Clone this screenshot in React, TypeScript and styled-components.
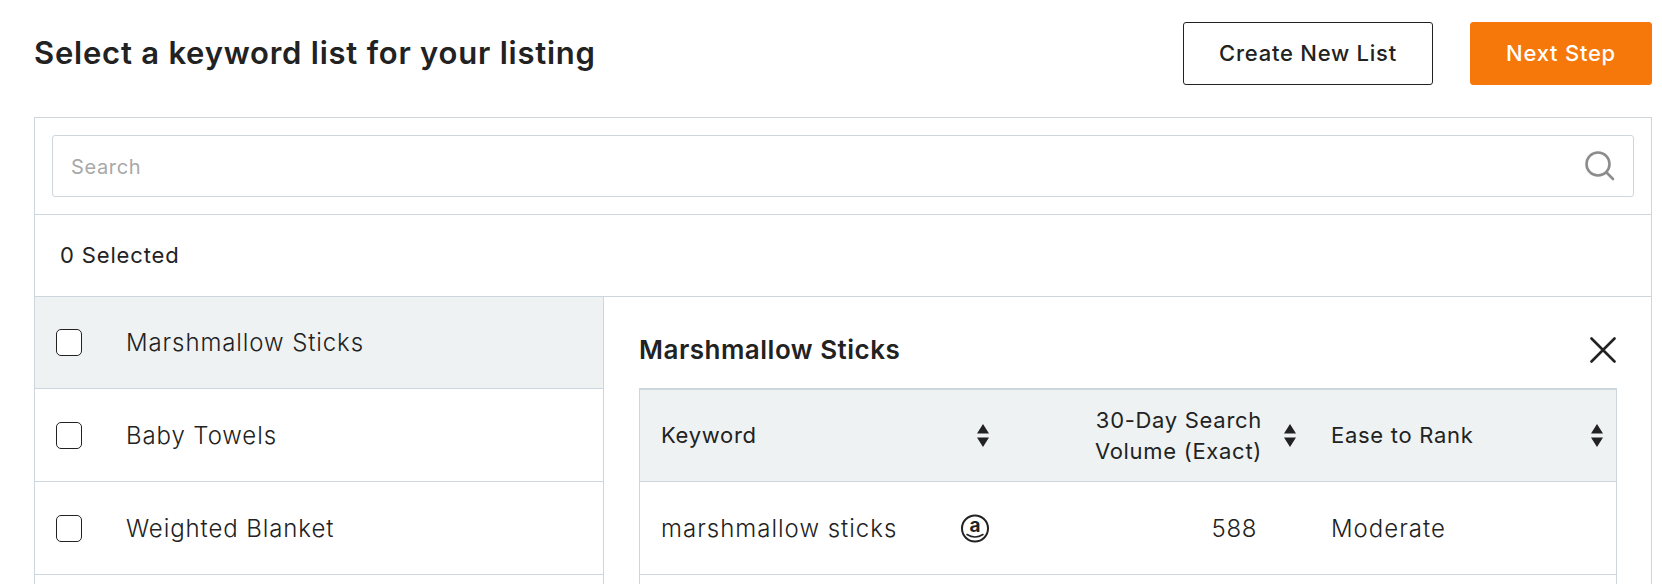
import React from "react";
import styled, { createGlobalStyle } from "styled-components";

const Global = createGlobalStyle`
  html, body { margin: 0; padding: 0; background: #fff; height: 584px; overflow: hidden; }
  body { font-family: "Inter", "Liberation Sans", sans-serif; color: #222; }
  * { box-sizing: border-box; }
`;

const line = "#cdd6dd";

const Page = styled.div`
  padding: 22px 10px 0 34px;
`;
const Header = styled.header`
  display: flex;
  align-items: center;
  height: 63px;
  margin-bottom: 32px;
`;
const Title = styled.h1`
  flex: 1;
  margin: 0 0 2px;
  font-size: 31px;
  font-weight: 600;
  letter-spacing: 0.78px;
  color: #222;
`;
const Button = styled.button<{ $primary?: boolean }>`
  height: 63px;
  width: ${(p) => (p.$primary ? "182px" : "250px")};
  margin-left: ${(p) => (p.$primary ? "37px" : "0")};
  padding: 0 0 2px;
  border-radius: 3px;
  border: 1px solid ${(p) => (p.$primary ? "#f7780a" : "#222")};
  background: ${(p) => (p.$primary ? "#f7780a" : "#fff")};
  color: ${(p) => (p.$primary ? "#fff" : "#222")};
  font-family: inherit;
  font-size: 22px;
  font-weight: 500;
  letter-spacing: 0.75px;
`;
const Panel = styled.section`
  border: 1px solid ${line};
  border-bottom: 0;
`;
const SearchBar = styled.div`
  padding: 17px;
  border-bottom: 1px solid ${line};
`;
const SearchField = styled.label`
  display: flex;
  align-items: center;
  justify-content: space-between;
  height: 62px;
  padding: 0 18px;
  border: 1px solid ${line};
  border-radius: 3px;
  font-size: 20px;
  color: #a8a8a8;
  letter-spacing: 0.65px;
`;
const Placeholder = styled.span`
  padding-top: 2px;
`;
const Selected = styled.div`
  display: flex;
  align-items: center;
  height: 82px;
  padding: 0 0 2px 25px;
  font-size: 22px;
  font-weight: 400;
  letter-spacing: 0.85px;
  border-bottom: 1px solid ${line};
`;
const Split = styled.div`
  display: grid;
  grid-template-columns: 569px 1fr;
`;
const List = styled.ul`
  margin: 0;
  padding: 0;
  list-style: none;
  border-right: 1px solid ${line};
`;
const ListRow = styled.li<{ $active?: boolean }>`
  display: flex;
  align-items: center;
  height: 93px;
  padding-left: 21px;
  border-bottom: 1px solid ${line};
  background: ${(p) => (p.$active ? "#eef2f3" : "#fff")};
  font-size: 24px;
  font-weight: 300;
  letter-spacing: 0.9px;
  &:first-child { height: 92px; }
`;
const Check = styled.span`
  flex: none;
  width: 26px;
  height: 27px;
  margin-right: 44px;
  border: 1px solid #222;
  border-radius: 5px;
  background: #fff;
`;
const Detail = styled.div`
  padding: 0 34px 0 35px;
`;
const DetailHead = styled.div`
  display: flex;
  align-items: center;
  justify-content: space-between;
  height: 91px;
  padding: 14px 1px 0 0;
`;
const DetailTitle = styled.h2`
  margin: 0;
  font-size: 26px;
  font-weight: 600;
  letter-spacing: 0.5px;
`;
const Table = styled.div`
  border: 1px solid ${line};
  border-top-width: 2px;
  border-bottom: 0;
`;
const HeadRow = styled.div`
  display: grid;
  grid-template-columns: 363px 308px 1fr;
  height: 92px;
  border-bottom: 1px solid ${line};
  background: #eef2f3;
  font-size: 22px;
  font-weight: 400;
  letter-spacing: 0.7px;
`;
const BodyRow = styled.div`
  display: grid;
  grid-template-columns: 363px 308px 1fr;
  height: 93px;
  border-bottom: 1px solid ${line};
  font-size: 24px;
  font-weight: 300;
  letter-spacing: 1px;
`;
const Cell = styled.div`
  display: flex;
  align-items: center;
  justify-content: space-between;
  padding: 0 14px 0 21px;
`;
const VolumeHead = styled(Cell)`
  justify-content: flex-end;
  gap: 22px;
  padding-right: 15px;
`;
const VolumeValue = styled(Cell)`
  justify-content: flex-end;
  padding: 0 54px 0 0;
  letter-spacing: 0.6px;
`;
const RankCell = styled(Cell)`
  padding: 0 13px 0 20px;
`;
const HeadText = styled.span<{ $right?: boolean }>`
  line-height: 31px;
  text-align: ${(p) => (p.$right ? "right" : "left")};
`;

const Sort = () => (
  <svg width="12" height="23" viewBox="0 0 12 23" style={{ flex: "none" }}>
    <path d="M6 0L12 9.5H0z M0 13.5H12L6 23z" fill="#222" />
  </svg>
);

const AmazonMark = () => (
  <svg width="28" height="29" viewBox="0 0 28 29" style={{ flex: "none" }}>
    <circle cx="14" cy="14.5" r="13" fill="none" stroke="#222" strokeWidth="2" />
    <text x="14" y="18" textAnchor="middle" fontSize="19" fontWeight="700" fill="#222" letterSpacing="0" fontFamily="Inter, sans-serif">a</text>
    <path d="M6 20.5c5 3 11 3 16 0" fill="none" stroke="#222" strokeWidth="1.5" strokeLinecap="round" />
  </svg>
);

const lists = ["Marshmallow Sticks", "Baby Towels", "Weighted Blanket", ""];

export default function App() {
  return (
    <Page>
      <Global />
      <Header>
        <Title>Select a keyword list for your listing</Title>
        <Button>Create New List</Button>
        <Button $primary>Next Step</Button>
      </Header>
      <Panel>
        <SearchBar>
          <SearchField>
            <Placeholder>Search</Placeholder>
            <svg width="30" height="30" viewBox="0 0 30 30" fill="none" stroke="#8c8c8c" strokeWidth="2.6" strokeLinecap="round">
              <circle cx="13" cy="13" r="11.5" />
              <path d="M21.5 21.5L28 28" />
            </svg>
          </SearchField>
        </SearchBar>
        <Selected>0 Selected</Selected>
        <Split>
          <List>
            {lists.map((name, i) => (
              <ListRow key={i} $active={i === 0}>
                <Check />
                {name}
              </ListRow>
            ))}
          </List>
          <Detail>
            <DetailHead>
              <DetailTitle>Marshmallow Sticks</DetailTitle>
              <svg width="26" height="26" viewBox="0 0 26 26" stroke="#222" strokeWidth="2.6" strokeLinecap="round">
                <path d="M1.5 1.5L24.5 24.5M24.5 1.5L1.5 24.5" />
              </svg>
            </DetailHead>
            <Table>
              <HeadRow>
                <Cell><HeadText>Keyword</HeadText><Sort /></Cell>
                <VolumeHead>
                  <HeadText $right>30-Day Search<br />Volume (Exact)</HeadText>
                  <Sort />
                </VolumeHead>
                <RankCell><HeadText>Ease to Rank</HeadText><Sort /></RankCell>
              </HeadRow>
              <BodyRow>
                <Cell>marshmallow sticks<AmazonMark /></Cell>
                <VolumeValue>588</VolumeValue>
                <RankCell>Moderate</RankCell>
              </BodyRow>
              <BodyRow />
            </Table>
          </Detail>
        </Split>
      </Panel>
    </Page>
  );
}
